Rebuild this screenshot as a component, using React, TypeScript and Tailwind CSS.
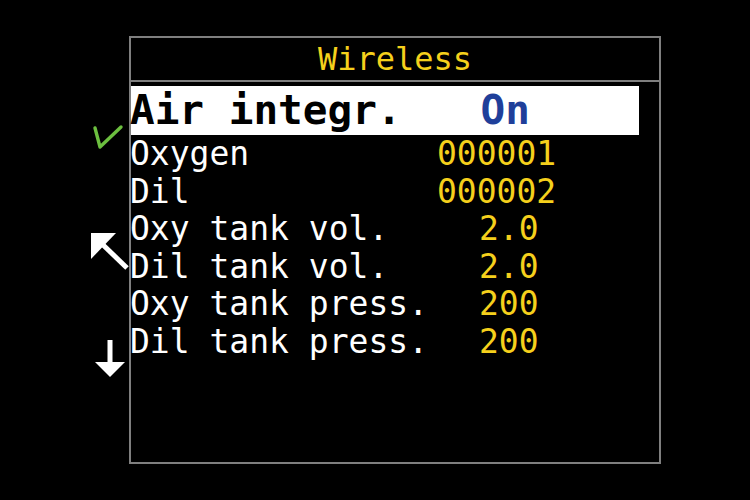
const mono = { fontFamily: '"DejaVu Sans Mono", "Liberation Mono", monospace' }

const rows = [
  { label: 'Oxygen', value: '000001', w: 'w-[307px]' },
  { label: 'Dil', value: '000002', w: 'w-[307px]' },
  { label: 'Oxy tank vol.', value: '2.0', w: 'w-[349px]' },
  { label: 'Dil tank vol.', value: '2.0', w: 'w-[349px]' },
  { label: 'Oxy tank press.', value: '200', w: 'w-[349px]' },
  { label: 'Dil tank press.', value: '200', w: 'w-[349px]' },
]

export default function App() {
  return (
    <div className="w-[750px] h-[500px] bg-black flex pt-[36px] pl-[85px]" style={mono}>
      {/* side hints */}
      <div className="w-[44px] flex flex-col">
        <svg className="mt-[88px]" width="44" height="26" viewBox="0 0 44 26">
          <polyline points="10,4 15,23 36,3" fill="none" stroke="#6cbf3f" strokeWidth="3.4" strokeLinecap="round" strokeLinejoin="round" />
        </svg>
        <svg className="mt-[81px]" width="44" height="40" viewBox="0 0 44 40">
          <polygon points="6,2 31,2 6,28" fill="#fff" />
          <line x1="14" y1="10" x2="42" y2="37" stroke="#fff" strokeWidth="5" />
        </svg>
        <svg className="mt-[67px]" width="44" height="42" viewBox="0 0 44 42">
          <rect x="22.5" y="2" width="5" height="24" fill="#fff" />
          <polygon points="10,24 40,24 25,39" fill="#fff" />
        </svg>
      </div>

      {/* menu */}
      <div className="w-[532px] h-[428px] border-2 border-[#7f7f7f] flex flex-col">
        <div className="h-[42px] flex items-center justify-center text-[32px] text-[#f5d01c]">
          Wireless
        </div>
        <div className="h-[2px] bg-[#7f7f7f]" />
        <div className="mt-[4px] h-[49px] w-[508px] bg-white flex text-[41px] font-bold leading-[49px] whitespace-pre">
          <span className="text-black -ml-[1px]">Air integr.</span>
          <span className="ml-[79px] text-[#1f3f9a]">On</span>
        </div>
        <div className="flex flex-col text-[33px] leading-[37.5px] whitespace-pre -ml-[1px]">
          {rows.map((r) => (
            <div key={r.label} className="flex h-[37.5px]">
              <span className={`text-white ${r.w}`}>{r.label}</span>
              <span className="text-[#f5d01c]">{r.value}</span>
            </div>
          ))}
        </div>
      </div>
    </div>
  )
}
